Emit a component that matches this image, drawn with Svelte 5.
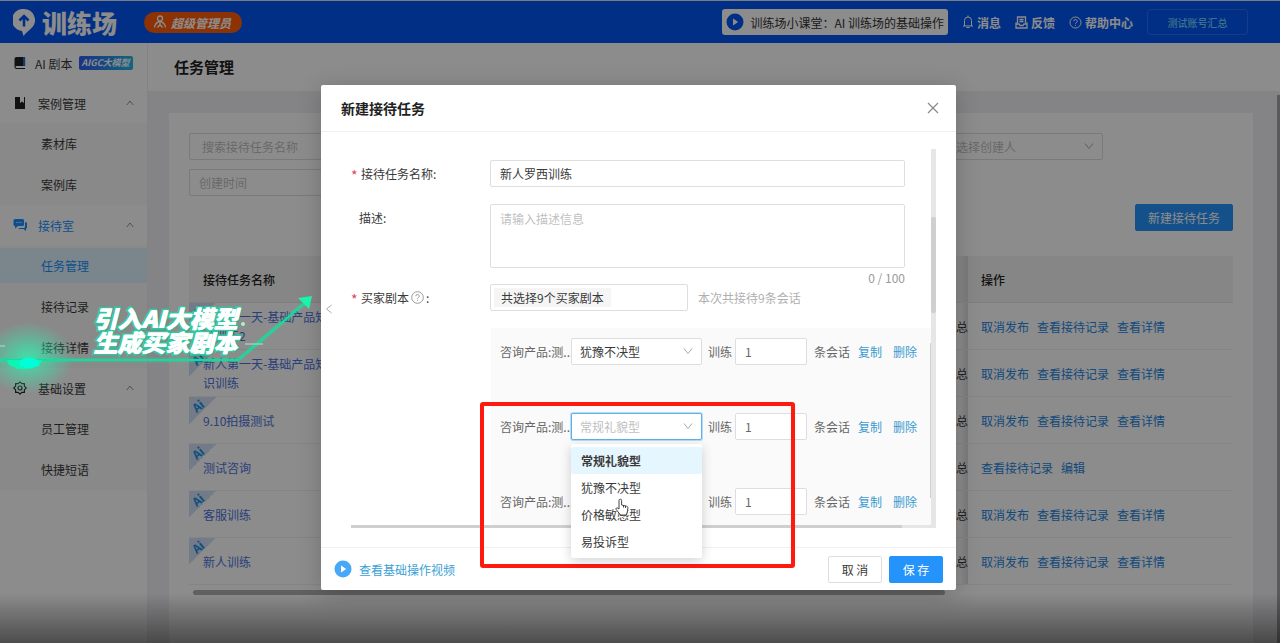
<script lang="ts">
	interface MenuGroup {
		name: string;
		icon: string;
		badge?: string;
		active?: boolean;
		children?: string[];
	}

	const menu: MenuGroup[] = [
		{ name: 'AI 剧本', icon: 'book', badge: 'AIGC大模型' },
		{ name: '案例管理', icon: 'case', children: ['素材库', '案例库'] },
		{ name: '接待室', icon: 'chat', active: true, children: ['任务管理', '接待记录', '接待详情'] },
		{ name: '基础设置', icon: 'gear', children: ['员工管理', '快捷短语'] }
	];

	const published = ['取消发布', '查看接待记录', '查看详情'];
	const tasks = [
		{ name: '新人第一天-基础产品知识训练2', actions: published },
		{ name: '新人第一天-基础产品知识训练', actions: published },
		{ name: '9.10拍摄测试', actions: published },
		{ name: '测试咨询', actions: ['查看接待记录', '编辑'] },
		{ name: '客服训练', actions: published },
		{ name: '新人训练', actions: published }
	];

	const buyerTypes = ['常规礼貌型', '犹豫不决型', '价格敏感型', '易投诉型'];

	let current = $state('任务管理');
	let taskName = $state('新人罗西训练');
	let description = $state('');
	let openRow = $state(1);
	let scripts = $state([
		{ type: '犹豫不决型', count: '1' },
		{ type: '常规礼貌型', count: '1' },
		{ type: '常规礼貌型', count: '1' }
	]);

	const pick = (row: number, type: string) => {
		scripts[row].type = type;
		openRow = -1;
	};
</script>

{#snippet chevron(dir: string)}
	<svg class="chevron {dir}" viewBox="0 0 10 10" width="10" height="10" aria-hidden="true">
		<path d="M1 2.5 5 7.5 9 2.5" fill="none" stroke="currentColor" />
	</svg>
{/snippet}

{#snippet play(size: number)}
	<svg class="play" viewBox="0 0 18 18" width={size} height={size} aria-hidden="true">
		<circle cx="9" cy="9" r="8.5" fill="currentColor" />
		<path d="M7 5.6v6.8L12.2 9z" class="play-mark" />
	</svg>
{/snippet}

{#snippet menuIcon(name: string)}
	<svg class="menu-icon" viewBox="0 0 14 14" width="14" height="14" aria-hidden="true">
		{#if name === 'book'}
			<path d="M3.500 1H10v9H3.500a1 1 0 0 0 0 2H12v1H3a2 2 0 0 1-1.500-2V3a2 2 0 0 1 2-2z" fill="#222" />
			<path d="M10 1h2.200v9H10z" fill="#2468c8" />
		{:else if name === 'case'}
			<path d="M2 1h5v6l2-1.500L11 7V1h1v12H2z" fill="#222" />
		{:else if name === 'chat'}
			<path d="M2 1h7.500A1.500 1.500 0 0 1 11 2.500v4A1.500 1.500 0 0 1 9.500 8H5l-3 2.500V8A1.500 1.500 0 0 1 .5 6.500v-4A1.500 1.500 0 0 1 2 1z" fill="#1890ff" />
			<path d="M12 4h.5A1.500 1.500 0 0 1 14 5.500v4a1.500 1.500 0 0 1-1 1.400V13l-2.500-2H6.500L5 10h5.500A1.500 1.500 0 0 0 12 8.500z" fill="#1890ff" />
			<path d="M3.500 4.500h1M5.500 4.500h1M7.500 4.500h1" stroke="#fff" />
		{:else}
			<path d="M7 .8 8.800 2.600h2.600v2.600L13.200 7l-1.800 1.800v2.600H8.800L7 13.200l-1.800-1.800H2.600V8.800L.8 7l1.800-1.800V2.600h2.600z" fill="none" stroke="#222" stroke-width="1.200" stroke-linejoin="round" />
			<circle cx="7" cy="7" r="2" fill="none" stroke="#222" stroke-width="1.200" />
		{/if}
	</svg>
{/snippet}

<div class="page">
	<header class="topbar">
		<svg class="logo" viewBox="0 0 22 27" width="22" height="27" aria-hidden="true">
			<path d="M11 0a11 11 0 0 1 8 18.500C16.500 21 13 23.500 10.500 27L9 22A11 11 0 0 1 11 0z" fill="#fff" />
			<path d="M11 17.500V8M6.500 11.500 11 7l4.500 4.500" fill="none" stroke="#0553f5" stroke-width="2.500" />
		</svg>
		<span class="brand">训练场</span>
		<span class="role">
			<svg viewBox="0 0 14 14" width="14" height="14" aria-hidden="true">
				<g fill="none" stroke="#fff" stroke-width="1.300">
					<circle cx="7" cy="3.500" r="2.500" />
					<path d="M7 6v4M1.500 12.500C2 9 4 7 7 6.500c3 .5 5 2.500 5.500 6M4.500 12.500 7 9.500l2.500 3" />
				</g>
			</svg>
			超级管理员
		</span>
		<nav class="tools">
			<a class="course" href="#course">{@render play(18)}训练场小课堂：AI 训练场的基础操作</a>
			<a class="tool" href="#message">
				<svg viewBox="0 0 12 14" width="12" height="14" aria-hidden="true">
					<path d="M1 11h10M2.500 11V5.500a3.500 3.500 0 0 1 7 0V11M6 2V.5M4.500 12.500h3" fill="none" stroke="currentColor" />
				</svg>
				消息
			</a>
			<a class="tool" href="#feedback">
				<svg viewBox="0 0 13 13" width="13" height="13" aria-hidden="true">
					<path d="M2.500 7V1h8v6M1 6.500v5.500h11V6.500M1 8h3l1 1.500h3L9 8h3M4.500 3.500h4M4.500 5.500h4" fill="none" stroke="currentColor" stroke-width="1.300" />
				</svg>
				反馈
			</a>
			<a class="tool" href="#help">
				<svg viewBox="0 0 13 13" width="13" height="13" aria-hidden="true">
					<circle cx="6.500" cy="6.500" r="5.500" fill="none" stroke="currentColor" />
					<path d="M4.800 5.200a1.700 1.700 0 1 1 2.500 1.500c-.6.3-.8.6-.8 1.100M6.500 8.800v1" fill="none" stroke="currentColor" />
				</svg>
				帮助中心
			</a>
			<button class="account">测试账号汇总</button>
		</nav>
	</header>

	<div class="layout">
		<aside>
			{#each menu as group}
				<a class="group" class:active={group.active} href="#menu">
					{@render menuIcon(group.icon)}
					<span class:wide={group.children}>{group.name}</span>
					{#if group.badge}<em>{group.badge}</em>{/if}
					{#if group.children}{@render chevron('up')}{/if}
				</a>
				{#if group.children}
					<div class="submenu">
						{#each group.children as item}
							<a href="#menu" class:selected={item === current} onclick={() => (current = item)}>{item}</a>
						{/each}
					</div>
				{/if}
			{/each}
		</aside>

		<main>
			<h1>任务管理</h1>
			<div class="scroll-area">
				<section class="panel">
					<div class="filters">
						<input placeholder="搜索接待任务名称" aria-label="搜索接待任务名称" />
						<span class="select">
							<select aria-label="状态"><option></option></select>
						</span>
						<span class="select">
							<select aria-label="创建人"><option>请选择创建人</option></select>
							{@render chevron('down')}
						</span>
						<input class="date" placeholder="创建时间" aria-label="创建时间" />
					</div>
					<div class="toolbar"><button class="primary">新建接待任务</button></div>

					<table>
						<colgroup>
							<col class="col-name" />
							<col />
							<col class="col-account" />
							<col class="col-action" />
						</colgroup>
						<thead>
							<tr><th>接待任务名称</th><th></th><th class="account-cell"></th><th>操作</th></tr>
						</thead>
						<tbody>
							{#each tasks as task}
								<tr>
									<td class="name"><i><span>Ai</span></i><a href="#task">{task.name}</a></td>
									<td></td>
									<td class="account-cell">账号汇总</td>
									<td>
										<div class="actions">
											{#each task.actions as action}<a href="#task">{action}</a>{/each}
										</div>
									</td>
								</tr>
							{/each}
						</tbody>
					</table>
					<div class="table-scroll"></div>
				</section>
				<div class="page-scroll"></div>
			</div>
		</main>
	</div>
</div>

<div class="mask">
	<div class="modal" role="dialog" aria-modal="true" aria-labelledby="modal-title">
		<header class="modal-head">
			<h2 id="modal-title">新建接待任务</h2>
			<button class="close" aria-label="关闭">
				<svg viewBox="0 0 12 12" width="12" height="12">
					<path d="M1 1 11 11M11 1 1 11" stroke="currentColor" stroke-width="1.200" />
				</svg>
			</button>
		</header>

		<div class="modal-body">
			<div class="form-view">
				<form>
					<div class="field">
						<label for="task-name"><b>*</b>接待任务名称:</label>
						<input id="task-name" bind:value={taskName} />
					</div>
					<div class="field">
						<label class="optional" for="task-desc">描述:</label>
						<div class="grow">
							<textarea id="task-desc" placeholder="请输入描述信息" bind:value={description}></textarea>
							<div class="counter">{description.length} / 100</div>
						</div>
					</div>
					<div class="field scripts-field">
						<label for="script-picker">
							<b>*</b>买家剧本
							<svg viewBox="0 0 13 13" width="13" height="13" aria-hidden="true">
								<circle cx="6.500" cy="6.500" r="5.800" fill="none" stroke="#999" />
								<path d="M4.800 5.200a1.700 1.700 0 1 1 2.500 1.500c-.6.3-.8.6-.8 1.100M6.500 8.800v1" fill="none" stroke="#999" />
							</svg>:
						</label>
						<button type="button" class="picker" id="script-picker"><span>共选择9个买家剧本</span></button>
						<span class="hint">本次共接待9条会话</span>
					</div>
				</form>

				<div class="script-list">
					<div class="script-rows">
						{#each scripts as script, i}
							<div class="script-row">
								<span class="product">咨询产品:测...</span>
								<span class="select" class:open={i === openRow}>
									<select aria-label="买家类型" bind:value={script.type}>
										{#each buyerTypes as type}<option>{type}</option>{/each}
									</select>
									{@render chevron('down')}
									{#if i === openRow}
										<div class="dropdown" role="listbox">
											{#each buyerTypes as type}
												<button
													type="button"
													role="option"
													aria-selected={type === script.type}
													onclick={() => pick(i, type)}>{type}</button
												>
											{/each}
											<svg class="cursor" viewBox="0 0 14 18" width="14" height="18" aria-hidden="true">
												<path d="M4 11V2.500a1.300 1.300 0 0 1 2.600 0V7l5 1.200c1 .3 1.400.8 1.300 1.800L12.300 14l-1 3H5.500L1.200 11.500c-.8-1.200.6-2.200 1.600-1.300z" fill="#fff" stroke="#444" />
												<path d="M8.500 7.500v2M10.500 8v2" stroke="#444" fill="none" />
											</svg>
										</div>
									{/if}
								</span>
								<label class="count">训练<input bind:value={script.count} /></label>
								<span>条会话</span>
								<a href="#copy">复制</a>
								<a class="remove" href="#remove">删除</a>
							</div>
						{/each}
					</div>
					<div class="list-scroll"></div>
				</div>
				<div class="hbar"></div>
			</div>
			<div class="vbar"><div></div></div>
		</div>

		<footer>
			<a href="#video">{@render play(18)}查看基础操作视频</a>
			<button>取 消</button>
			<button class="primary">保 存</button>
		</footer>

		<div class="prev">{@render chevron('left')}</div>
	</div>
</div>

<div class="highlight"></div>
<div class="fade"></div>

<div class="callout">
	<svg viewBox="0 0 330 130" width="330" height="130" aria-hidden="true">
		<defs>
			<radialGradient id="glow">
				<stop offset="0" stop-color="#2cf5b0" stop-opacity="0.800" />
				<stop offset="1" stop-color="#2cf5b0" stop-opacity="0" />
			</radialGradient>
		</defs>
		<ellipse cx="28" cy="78" rx="46" ry="36" fill="url(#glow)" />
		<path d="M0 80H238L306 22" fill="none" stroke="#10f0a0" stroke-width="5" opacity="0.250" />
		<path d="M0 80H238L306 22" fill="none" stroke="#14dca0" stroke-width="2" />
		<path d="M298 18 312 16 309 29z" fill="#18f5a8" />
		<path d="M7 80H42l-3 6-10 3H18L9 85z" fill="#0cf5b4" />
		<ellipse cx="29" cy="83" rx="10" ry="5" fill="#00ffd8" />
		<path d="M0 66h5M245 64h18" stroke="#a6d8c4" stroke-width="2" opacity="0.600" />
		<circle cx="243" cy="44" r="2" fill="#a6f5c8" />
	</svg>
	<p>引入AI大模型<br />生成买家剧本</p>
</div>

<style>
	:global(body) {
		margin: 0;
		background: #fff;
	}
	:global(#app) {
		position: relative;
		overflow: hidden;
		font: 12px/19px 'Noto Sans CJK SC', sans-serif;
		color: #3a3a3a;
	}
	:global(#app *) {
		box-sizing: border-box;
	}
	a {
		color: inherit;
		text-decoration: none;
	}
	input,
	select,
	textarea,
	button {
		margin: 0;
		font: inherit;
		color: inherit;
		background: #fff;
		border: 1px solid #dedede;
		border-radius: 2px;
		outline: none;
	}
	input,
	select {
		height: 27px;
		padding: 0 9px;
	}
	::placeholder {
		color: #bfbfbf;
	}
	.chevron {
		flex: none;
		color: #aaa;
	}
	.chevron.up {
		width: 8px;
		height: 8px;
		transform: rotate(180deg);
		color: #777;
	}
	.chevron.left {
		transform: rotate(90deg);
	}
	.play {
		flex: none;
	}
	.play-mark {
		fill: #fff;
	}
	.select {
		position: relative;
		display: block;
	}
	.select select {
		display: block;
		width: 100%;
		padding: 0 8px;
		appearance: none;
	}
	.select > :global(.chevron) {
		position: absolute;
		top: 8px;
		right: 9px;
	}
	.primary {
		color: #fff;
		background: #2593fc;
		border-color: #2593fc;
	}

	.page {
		display: flex;
		flex-direction: column;
		min-height: 100vh;
	}
	.topbar {
		display: flex;
		align-items: center;
		height: 43px;
		padding: 0 32px 0 13px;
		color: #fff;
		background: #0557f5;
		border-top: 1px solid #dde6f5;
	}
	.brand {
		margin-left: 7px;
		font-size: 25px;
		font-weight: 900;
		line-height: 30px;
	}
	.role {
		display: flex;
		align-items: center;
		gap: 4px;
		height: 21px;
		margin-left: 27px;
		padding: 0 11px 0 9px;
		font-weight: 700;
		font-style: italic;
		background: #ff5c0a;
		border-radius: 11px;
	}
	.tools {
		display: flex;
		align-items: center;
		gap: 14px;
		margin-left: auto;
	}
	.course {
		display: flex;
		align-items: center;
		gap: 6px;
		height: 26px;
		padding: 0 4px;
		color: #333;
		background: #fff;
		border-radius: 3px;
	}
	.course .play {
		color: #0557f5;
	}
	.tool {
		display: flex;
		align-items: center;
		gap: 3px;
		font-weight: 700;
	}
	.account {
		width: 101px;
		height: 26px;
		font-size: 10px;
		color: #84e4ff;
		background: none;
		border-color: #2a6cf5;
		border-radius: 4px;
	}

	.layout {
		display: flex;
		flex: 1;
	}
	aside {
		flex: none;
		width: 148px;
		background: #fff;
		border-right: 1px solid #eee;
	}
	.group {
		display: flex;
		align-items: center;
		height: 40px;
		padding: 0 13px;
	}
	.group span {
		margin: 0 6px 0 8px;
	}
	.group .wide {
		margin: 0 auto 0 11px;
	}
	.group em {
		padding: 0 3px;
		font-size: 9px;
		font-weight: 700;
		line-height: 14px;
		color: #fff;
		white-space: nowrap;
		background: linear-gradient(90deg, #2f5cf0, #22b8ea);
		border-radius: 2px;
	}
	.group.active,
	.selected {
		color: #1890ff;
	}
	.submenu {
		padding: 1px 0;
		background: #fafafa;
	}
	.submenu a {
		display: block;
		height: 35px;
		margin-bottom: 6px;
		padding-left: 41px;
		line-height: 35px;
	}
	.submenu a:first-child {
		margin-top: 2px;
	}
	.submenu a:last-child {
		margin-bottom: 2px;
	}
	.submenu .selected {
		background: #e0f4ff;
	}

	main {
		display: flex;
		flex: 1;
		flex-direction: column;
		min-width: 0;
	}
	h1 {
		margin: 0;
		padding-left: 26px;
		font-size: 15px;
		line-height: 48px;
		color: #222;
	}
	.scroll-area {
		display: flex;
		flex: 1;
		padding-left: 21px;
		background: #f0f0f5;
	}
	.panel {
		flex: 1;
		margin: 22px 24px 0 0;
		padding: 20px 20px 0;
		background: #fff;
	}
	.page-scroll {
		width: 3px;
		margin-top: 4px;
		background: #a5a5a8;
	}
	.filters {
		display: grid;
		grid-template-columns: 1fr 1fr 171px;
		gap: 9px 16px;
		margin-right: 130px;
	}
	.filters input {
		padding: 0 12px;
	}
	.filters .date {
		padding: 0 9px;
	}
	.filters select {
		padding: 0 11px;
		color: #bfbfbf;
	}
	.toolbar {
		display: flex;
		justify-content: flex-end;
		margin: 8px 0 25px;
	}
	.toolbar button {
		height: 27px;
		padding: 0 12px;
	}

	table {
		width: 100%;
		table-layout: fixed;
		border-collapse: separate;
		border-spacing: 0;
	}
	.col-name {
		width: 154px;
	}
	.col-account {
		width: 80px;
	}
	.col-action {
		width: 265px;
	}
	th {
		height: 47px;
		padding: 0 13px;
		font-weight: 500;
		text-align: left;
		color: #222;
		background: #f5f5f5;
		border-bottom: 1px solid #e8e8e8;
	}
	td {
		height: 47px;
		padding: 0 13px;
		border-bottom: 1px solid #f0f0f0;
	}
	th:first-child {
		padding-left: 14px;
	}
	td a {
		color: #2486e0;
	}
	.account-cell {
		padding: 0;
		text-align: right;
		background-image: linear-gradient(90deg, transparent 90%, #dcdcdc);
	}
	.name {
		position: relative;
		padding: 0 14px;
	}
	.name a {
		position: relative;
		color: #4c74e0;
	}
	.name i {
		position: absolute;
		top: 0;
		left: 0;
		width: 27px;
		height: 27px;
		background: linear-gradient(135deg, #d2e0fa 50%, transparent 50%);
	}
	.name i span {
		display: block;
		width: 17px;
		font-size: 12px;
		font-weight: 700;
		font-style: normal;
		line-height: 17px;
		text-align: center;
		color: #1890e0;
		transform: rotate(-40deg);
	}
	.actions {
		display: flex;
		gap: 8px;
	}
	.table-scroll {
		height: 5px;
		margin: 5px 288px 0 4px;
		background: #b0b0b0;
		border-radius: 3px;
	}

	.mask {
		position: absolute;
		inset: 0;
		padding: 85px 3px 0 0;
		background: rgba(0, 0, 0, 0.45);
	}
	.modal {
		position: relative;
		display: flex;
		flex-direction: column;
		width: 635px;
		margin: 0 auto;
		background: #fff;
		border-radius: 2px;
		box-shadow: 0 4px 24px rgba(0, 0, 0, 0.2);
	}
	.modal-head {
		display: flex;
		align-items: center;
		justify-content: space-between;
		height: 47px;
		padding: 0 16px 0 20px;
		border-bottom: 1px solid #f0f0f0;
	}
	h2 {
		margin: 0;
		font-size: 14px;
		color: #222;
	}
	.close {
		display: flex;
		padding: 1px;
		color: #888;
		border: 0;
	}
	.modal-body {
		display: flex;
		padding: 17px 20px 19px 30px;
	}
	.form-view {
		flex: 1;
		min-width: 0;
	}
	.vbar {
		width: 5px;
		padding-top: 68px;
		background: #e6e6e6;
	}
	.vbar div {
		height: 96px;
		background: #cfcfcf;
		border-radius: 2px;
	}
	form {
		padding: 11px 26px 0 0;
	}
	.field {
		display: flex;
		margin-bottom: 17px;
	}
	.field label {
		display: flex;
		flex: none;
		align-items: center;
		gap: 2px;
		width: 139px;
		height: 27px;
	}
	.field .optional {
		padding-left: 8px;
	}
	label b {
		width: 8px;
		height: 15px;
		font-size: 14px;
		font-weight: 400;
		color: #d9485a;
	}
	.field input,
	.grow {
		flex: 1;
	}
	textarea {
		display: block;
		width: 100%;
		height: 64px;
		padding: 4px 9px;
		resize: none;
	}
	.counter {
		height: 16px;
		color: #999;
		text-align: right;
	}
	.field:has(textarea) {
		margin-bottom: 0;
	}
	.picker {
		display: flex;
		align-items: center;
		width: 198px;
		height: 27px;
		padding: 0 3px;
	}
	.picker span {
		padding: 0 7px;
		background: #f5f5f5;
	}
	.hint {
		margin-left: 10px;
		line-height: 27px;
		color: #b0b0b0;
	}
	.script-list {
		display: flex;
		height: 197px;
		margin-left: 140px;
		background: #fafafa;
	}
	.script-rows {
		flex: 1;
		padding: 10px 0 0 9px;
	}
	.script-row {
		display: flex;
		align-items: center;
		height: 27px;
		margin-bottom: 48px;
		color: #666;
		white-space: nowrap;
	}
	.script-row select {
		color: #3a3a3a;
	}
	.script-row a {
		margin-left: 8px;
		color: #3a9ad0;
	}
	.script-row .remove {
		margin-left: 11px;
	}
	.product {
		width: 71px;
	}
	.script-row .select {
		width: 131px;
	}
	.script-row .open select {
		color: #bfbfbf;
		border-color: #5cb2ea;
		box-shadow: 0 0 0 1px #b5dcf5;
	}
	.count {
		display: flex;
		align-items: center;
		gap: 3px;
		margin: 0 7px 0 6px;
	}
	.count input {
		width: 72px;
	}
	.dropdown {
		position: absolute;
		top: 31px;
		left: 0;
		z-index: 2;
		width: 131px;
		padding: 3px 0;
		background: #fff;
		border-radius: 2px;
		box-shadow: 0 3px 12px rgba(0, 0, 0, 0.18);
	}
	.dropdown button {
		display: block;
		width: 100%;
		height: 27px;
		padding: 0 10px;
		text-align: left;
		color: #3a3a3a;
		background: none;
		border: 0;
	}
	.dropdown [aria-selected='true'] {
		font-weight: 700;
		background: #e6f6ff;
	}
	.cursor {
		position: absolute;
		top: 54px;
		left: 44px;
	}
	.list-scroll {
		width: 1px;
		margin: 15px 0 27px;
		background: #d0d0d0;
	}
	.hbar {
		height: 3px;
		background: linear-gradient(90deg, #cfcfcf 95%, #e6e6e6 95%);
	}
	footer {
		display: flex;
		align-items: center;
		gap: 7px;
		height: 43px;
		padding: 0 13px;
		border-top: 1px solid #f0f0f0;
	}
	footer a {
		display: flex;
		align-items: center;
		gap: 7px;
		margin-right: auto;
		color: #3a9fd5;
	}
	footer .play {
		color: #45a8f8;
	}
	footer button {
		width: 54px;
		height: 27px;
		padding: 0;
	}
	.prev {
		position: absolute;
		top: 214px;
		left: 3px;
	}

	/* tutorial overlays */
	.highlight {
		position: absolute;
		top: 402px;
		left: 480px;
		width: 315px;
		height: 166px;
		border: 4px solid #ff1a10;
		border-radius: 3px;
		pointer-events: none;
	}
	.fade {
		position: absolute;
		right: 0;
		bottom: 0;
		left: 0;
		height: 50px;
		background: linear-gradient(transparent, rgba(0, 0, 0, 0.45));
		pointer-events: none;
	}
	.callout {
		position: absolute;
		top: 280px;
		left: 0;
		pointer-events: none;
	}
	.callout svg {
		display: block;
	}
	.callout p {
		position: absolute;
		top: 26px;
		left: 93px;
		margin: 0;
		font-size: 24px;
		font-weight: 900;
		font-style: italic;
		line-height: 24px;
		color: #fff;
		white-space: nowrap;
		-webkit-text-stroke: 3px #2cc8a0;
		paint-order: stroke fill;
		text-shadow: 1px 0 #fff;
	}
</style>
